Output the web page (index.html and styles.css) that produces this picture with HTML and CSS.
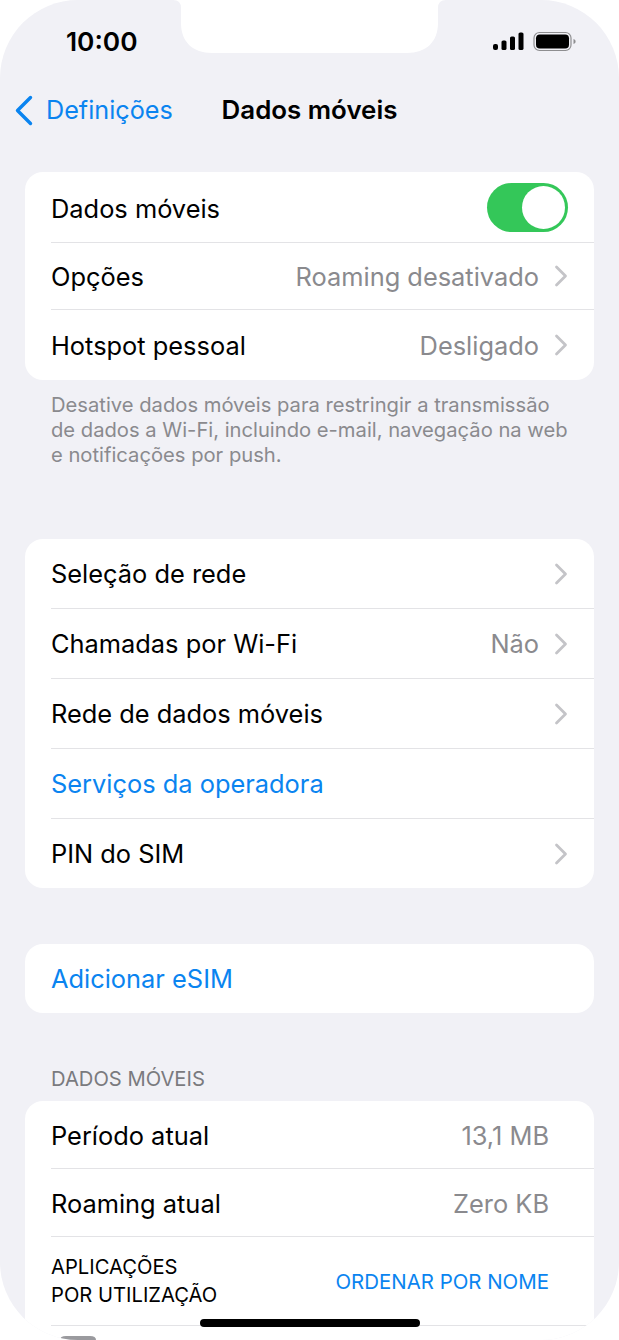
FILE: index.html
```html
<!DOCTYPE html>
<html>
<head>
  <meta charset="utf-8">
  <title>Dados móveis</title>
  <link rel="stylesheet" href="styles.css">
</head>
<body>
  <div id="screen">
    <svg class="notch" width="273" height="53" viewBox="0 0 273 53">
      <path d="M0 0 Q8 0 8 8 V23 C8 42 20 53 39 53 H234 C253 53 265 42 265 23 V8 Q265 0 273 0 Z" fill="#fff"/>
    </svg>

    <div id="status-bar">
      <span class="time">10:00</span>
      <div class="status-icons">
        <svg width="31" height="19" viewBox="0 0 31 19">
          <rect x="0" y="12" width="5" height="6" rx="2" fill="#000"/>
          <rect x="8.5" y="8.5" width="5" height="9.5" rx="1.6" fill="#000"/>
          <rect x="17" y="4.5" width="5" height="13.5" rx="1.6" fill="#000"/>
          <rect x="25.5" y="0.5" width="5" height="17.5" rx="1.6" fill="#000"/>
        </svg>
        <svg width="44" height="21" viewBox="0 0 44 21">
          <rect x="1" y="1.5" width="37" height="18" rx="5.5" fill="none" stroke="#8e8e90" stroke-width="1.2"/>
          <rect x="3" y="3.5" width="33" height="14" rx="3.8" fill="#000"/>
          <path d="M40.5 8 C42 8.5 42.6 9.5 42.6 10.5 C42.6 11.5 42 12.5 40.5 13 Z" fill="#8e8e90"/>
        </svg>
      </div>
    </div>

    <div id="nav">
      <div class="back">
        <svg width="20" height="31" viewBox="0 0 20 31">
          <path d="M16.5 2.5 L3.5 15.5 L16.5 28.5" fill="none" stroke="#0a84f0" stroke-width="3.4" stroke-linecap="round" stroke-linejoin="round"/>
        </svg>
        <span>Definições</span>
      </div>
      <div class="title">Dados móveis</div>
    </div>

    <div class="card first">
      <div class="row r70">
        <span class="nudge">Dados móveis</span>
        <div class="toggle"><div class="knob"></div></div>
      </div>
      <div class="row r67">
        <span>Opções</span>
        <span class="value">Roaming desativado</span>
        <svg class="chev" width="14" height="22" viewBox="0 0 14 22"><path d="M2.5 2 L11.5 11 L2.5 20" /></svg>
      </div>
      <div class="row r71">
        <span>Hotspot pessoal</span>
        <span class="value">Desligado</span>
        <svg class="chev" width="14" height="22" viewBox="0 0 14 22"><path d="M2.5 2 L11.5 11 L2.5 20" /></svg>
      </div>
    </div>
    <p class="note">Desative dados móveis para restringir a transmissão de dados a Wi-Fi, incluindo e-mail, navegação na web e notificações por push.</p>

    <div class="card second">
      <div class="row r69">
        <span>Seleção de rede</span>
        <svg class="chev push" width="14" height="22" viewBox="0 0 14 22"><path d="M2.5 2 L11.5 11 L2.5 20" /></svg>
      </div>
      <div class="row r70">
        <span>Chamadas por Wi-Fi</span>
        <span class="value">Não</span>
        <svg class="chev" width="14" height="22" viewBox="0 0 14 22"><path d="M2.5 2 L11.5 11 L2.5 20" /></svg>
      </div>
      <div class="row r70">
        <span>Rede de dados móveis</span>
        <svg class="chev push" width="14" height="22" viewBox="0 0 14 22"><path d="M2.5 2 L11.5 11 L2.5 20" /></svg>
      </div>
      <div class="row r70 link"><span>Serviços da operadora</span></div>
      <div class="row r70">
        <span>PIN do SIM</span>
        <svg class="chev push" width="14" height="22" viewBox="0 0 14 22"><path d="M2.5 2 L11.5 11 L2.5 20" /></svg>
      </div>
    </div>

    <div class="card third">
      <div class="row r69 link"><span>Adicionar eSIM</span></div>
    </div>

    <div class="section-header">DADOS MÓVEIS</div>
    <div class="card fourth">
      <div class="row r67 no-chev">
        <span class="nudge">Período atual</span>
        <span class="value nudge">13,1 MB</span>
      </div>
      <div class="row r68 no-chev">
        <span class="nudge">Roaming atual</span>
        <span class="value nudge">Zero KB</span>
      </div>
      <div class="row r89 no-chev">
        <span class="apps">APLICAÇÕES<br>POR UTILIZAÇÃO</span>
        <span class="sort">ORDENAR POR NOME</span>
      </div>
      <div class="row r70">
        <svg class="app-icon" width="36" height="36" viewBox="0 0 36 36">
          <path d="M0 14 Q0 10 6 10 H30 Q36 10 36 14 V36 H0 Z" fill="#9a9a9e"/>
        </svg>
      </div>
    </div>

    <div class="home-indicator"></div>
  </div>
</body>
</html>
```

FILE: styles.css
```css
html, body {
  margin: 0;
  background: #fff;
}
body {
  width: 619px;
  height: 1340px;
  overflow: hidden;
  font-family: Inter, "Liberation Sans", sans-serif;
  color: #000;
}
#screen {
  position: relative;
  height: 1340px;
  overflow: hidden;
  background: #f1f1f6;
  border-radius: 78px;
  display: flow-root;
}
.notch {
  position: absolute;
  top: 0;
  left: 173px;
}
.home-indicator {
  position: absolute;
  left: 200px;
  top: 1319px;
  width: 220px;
  height: 8px;
  border-radius: 4px;
  background: #000;
}

/* status bar */
#status-bar {
  height: 82px;
  display: flex;
  justify-content: space-between;
  align-items: center;
  padding: 0 42px 0 66px;
}
.time {
  font-size: 26.3px;
  font-weight: 600;
}
.status-icons {
  display: flex;
  align-items: center;
  gap: 9px;
}

/* nav */
#nav {
  height: 56px;
  display: grid;
  grid-template-columns: 1fr auto 1fr;
  align-items: center;
}
.back {
  display: flex;
  align-items: center;
  gap: 12px;
  padding-left: 14px;
  font-size: 25.2px;
  color: #0a84f0;
  white-space: nowrap;
}
.title {
  padding-bottom: 2px;
  font-size: 25.9px;
  font-weight: 600;
}

/* grouped lists */
.card {
  margin: 0 25px;
  background: #fff;
  border-radius: 18px;
  overflow: hidden;
}
.first { margin-top: 34px; }
.second { margin-top: 70px; }
.third { margin-top: 56px; }
.row {
  display: flex;
  align-items: center;
  box-sizing: border-box;
  margin-left: 26px;
  padding-right: 26px;
  font-size: 25.4px;
  white-space: nowrap;
}
.row + .row {
  border-top: 1px solid #e3e3e6;
}
.r67 { height: 67px; }
.r68 { height: 68px; }
.r69 { height: 69px; }
.r70 { height: 70px; }
.r71 { height: 71px; }
.r89 { height: 89px; }
.nudge { padding-top: 2px; }
.link { color: #0a84f0; }
.value {
  margin-left: auto;
  color: #8a8a8e;
}
.chev {
  margin-left: 15px;
  fill: none;
  stroke: #c4c4c8;
  stroke-width: 2.8;
  stroke-linecap: round;
  stroke-linejoin: round;
}
.push { margin-left: auto; }
.no-chev { padding-right: 45px; }
.toggle {
  margin-left: auto;
  width: 81px;
  height: 49px;
  box-sizing: border-box;
  padding: 3px;
  border-radius: 25px;
  background: #34c759;
  display: flex;
  justify-content: flex-end;
}
.knob {
  width: 43px;
  height: 43px;
  border-radius: 50%;
  background: #fff;
}
.note {
  width: 522px;
  height: 77px;
  margin: 12px 0 0 51px;
  font-size: 20.2px;
  line-height: 25.2px;
  color: #8a8a8e;
}
.section-header {
  margin: 54px 0 0 51px;
  height: 34px;
  font-size: 20.2px;
  line-height: 24px;
  color: #7a7a7e;
}
.apps {
  font-size: 20.2px;
  line-height: 28px;
}
.sort {
  margin-left: auto;
  font-size: 20.45px;
  color: #0a84f0;
}
.app-icon {
  align-self: flex-start;
  margin: 0 0 0 9px;
}
```
